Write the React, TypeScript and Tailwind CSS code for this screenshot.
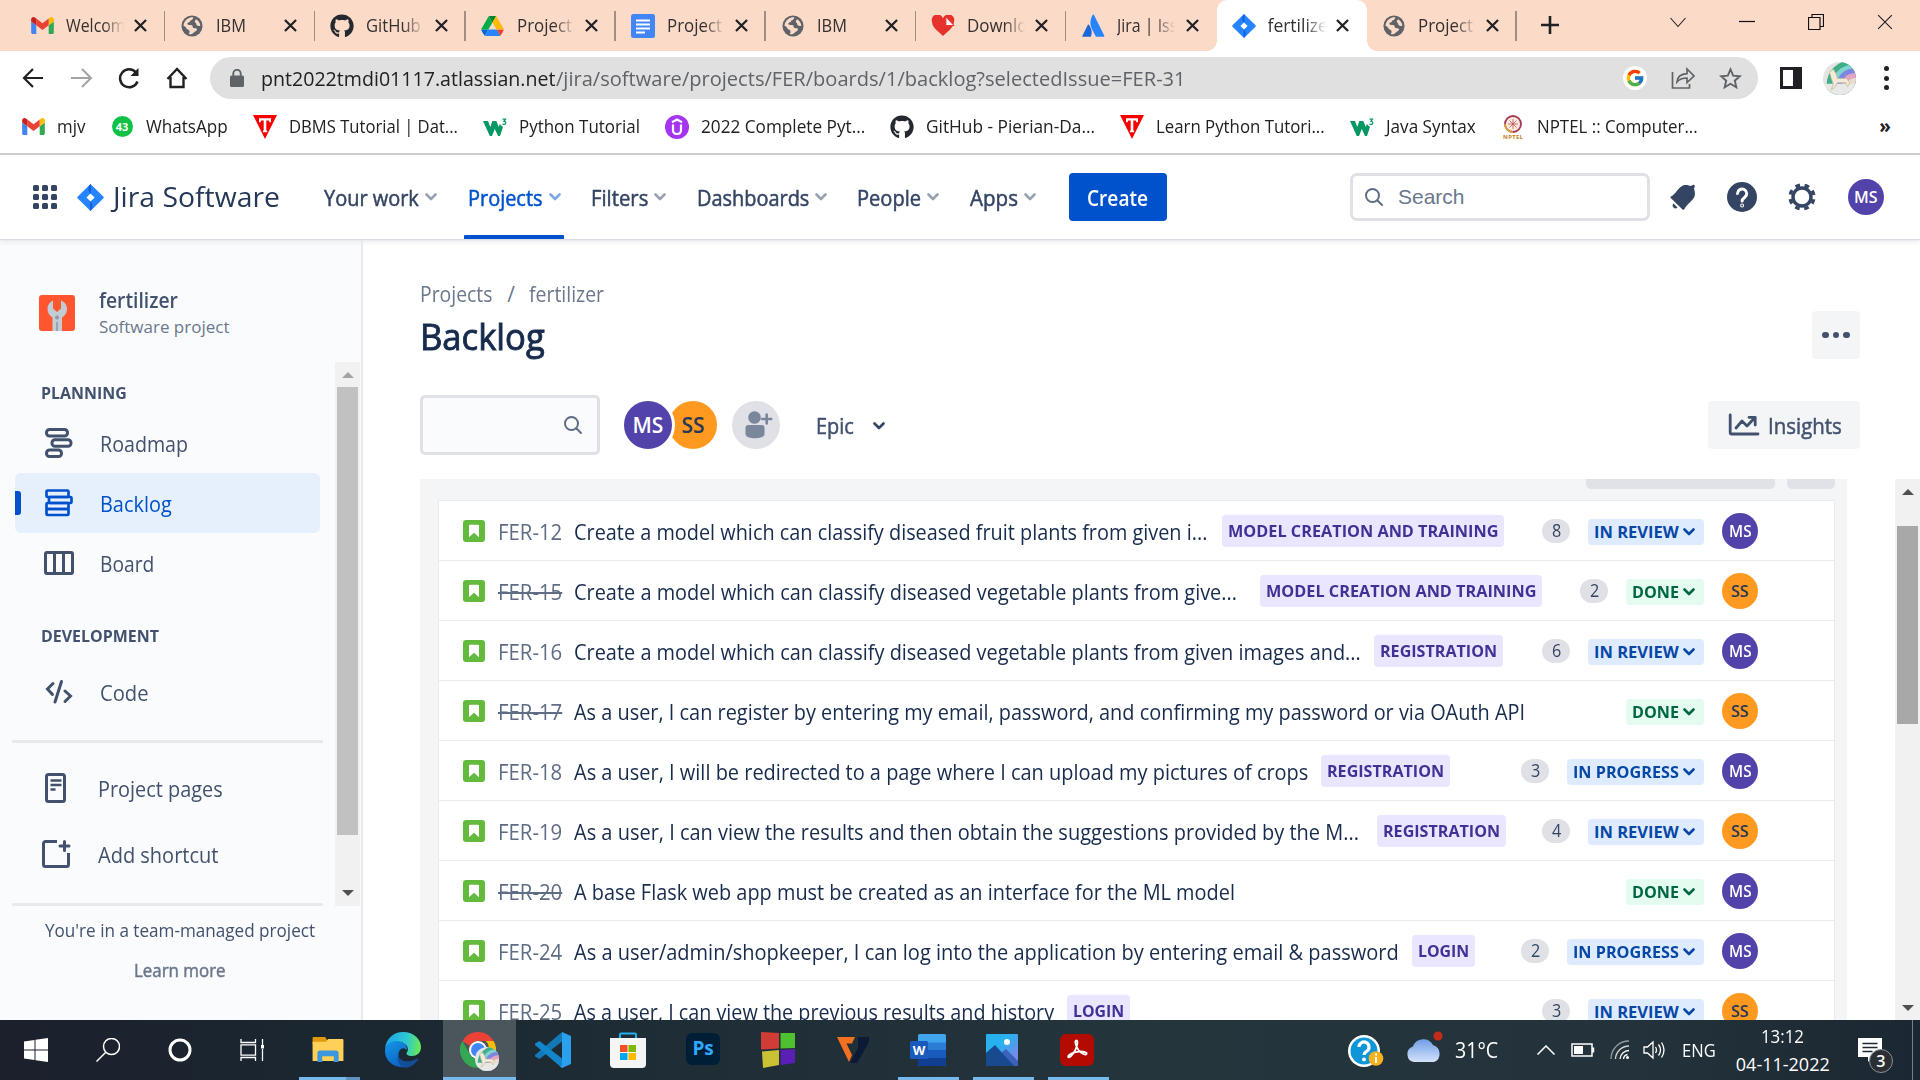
import React, { useLayoutEffect, useRef, useState } from "react";
import { FaGithub } from "react-icons/fa";
import { FcGoogle } from "react-icons/fc";

type FitProps = { w: number; className?: string; children: React.ReactNode };

/** Single line of text squeezed or stretched to an exact width. */
function Fit({ w, className = "", children }: FitProps) {
  const ref = useRef<HTMLSpanElement>(null);
  const [scale, setScale] = useState(1);
  useLayoutEffect(() => {
    if (ref.current) setScale(w / ref.current.offsetWidth);
  }, [w, children]);
  return (
    <span className={`block shrink-0 whitespace-nowrap ${className}`} style={{ width: w }}>
      <span ref={ref} className="inline-block origin-left" style={{ transform: `scaleX(${scale})` }}>
        {children}
      </span>
    </span>
  );
}

/* ---------- logos ---------- */

const Gmail = () => (
  <svg viewBox="52 42 88 66" className="h-[17px] w-[23px]">
    <path fill="#4285f4" d="M58 108h14V74L52 59v43c0 3.32 2.69 6 6 6" />
    <path fill="#34a853" d="M120 108h14c3.32 0 6-2.69 6-6V59l-20 15" />
    <path fill="#fbbc04" d="M120 48v26l20-15v-8c0-7.42-8.47-11.65-14.4-7.2" />
    <path fill="#ea4335" d="M72 74V48l24 18 24-18v26L96 92" />
    <path fill="#c5221f" d="M52 51v8l20 15V48l-5.6-4.2c-5.94-4.45-14.4-.22-14.4 7.2" />
  </svg>
);
const Drive = () => (
  <svg viewBox="0 0 87.3 78" className="h-5 w-[23px]">
    <path fill="#0066da" d="m6.6 66.85 3.85 6.65c.8 1.4 1.95 2.5 3.3 3.3l13.75-23.8h-27.5c0 1.55.4 3.1 1.2 4.5z" />
    <path fill="#00ac47" d="m43.65 25-13.75-23.8c-1.35.8-2.5 1.9-3.3 3.3l-25.4 44a9.06 9.06 0 0 0 -1.2 4.5h27.5z" />
    <path fill="#ea4335" d="m73.55 76.8c1.35-.8 2.5-1.9 3.3-3.3l1.6-2.75 7.65-13.25c.8-1.4 1.2-2.95 1.2-4.5h-27.502l5.852 11.5z" />
    <path fill="#00832d" d="m43.65 25 13.75-23.8c-1.35-.8-2.9-1.2-4.5-1.2h-18.5c-1.6 0-3.15.45-4.5 1.2z" />
    <path fill="#2684fc" d="m59.8 53h-32.3l-13.75 23.8c1.35.8 2.9 1.2 4.5 1.2h50.8c1.6 0 3.15-.45 4.5-1.2z" />
    <path fill="#ffba00" d="m73.4 26.5-12.7-22c-.8-1.4-1.95-2.5-3.3-3.3l-13.75 23.8 16.15 28h27.45c0-1.55-.4-3.1-1.2-4.5z" />
  </svg>
);
const Globe = () => (
  <svg viewBox="0 0 24 24" className="h-[22px] w-[22px]">
    <circle cx="12" cy="12" r="11.5" fill="#5f6368" />
    <path fill="#fcdac8" d="M13.5 2.6c-.6 1.7-1 2.7-2.8 3.1-1 .3-.7 2-1.900 2.300-1.300.3-2.300.9-1.800 2 .7 1.200 3.700.3 5 1.300 1.200 1 .3 2.400 1.700 2.900 1.600.5 2.800-.2 3.500.9.5 1-.1 2.100-1.300 2.700-1.500.8-2 1.700-3.500 2.600-.9.5-2.500.8-4 .5 1-1.300 1.200-2.600.6-3.900-.6-1.200-2.300-.8-3-2.200-.8-1.700-1.600-2.800-3.300-3.200.2-2.900 1.700-5.600 4.200-7.300 2-1.400 4.300-2 6.600-1.700z" />
    <path fill="#fcdac8" d="M16.500 4.500c2.600 1.500 4.400 4.200 4.600 7.200-1.300.6-2.800.4-3.800-.5-.9-.9-.3-2-1.500-2.800-1.300-.9-.8-2.700.7-3.900z" />
  </svg>
);
const Docs = () => (
  <svg viewBox="0 0 24 24" className="h-6 w-6">
    <rect width="24" height="24" rx="2.500" fill="#4285f4" />
    <path stroke="#fff" strokeWidth="2" d="M5 6.500h14M5 10.500h14M5 14.500h14M5 18.500h9" />
  </svg>
);
const Heart = () => (
  <svg viewBox="0 0 24 22" className="h-[21px] w-6">
    <path fill="#e5322d" d="M12 22C7 17 .5 13 .5 7A6 6 0 0 1 12 3.500 6 6 0 0 1 23.500 7C23.500 13 17 17 12 22z" />
    <path fill="#fff" stroke="#e5322d" d="M15 11V2l8.500 9z" />
  </svg>
);
const Atlassian = () => (
  <svg viewBox="0 0 24 24" className="h-[23px] w-[23px]">
    <path fill="#1868db" d="M7.100 11.300c-.4-.4-.9-.4-1.100.1L.3 22.900c-.2.4 0 .9.500.9h7.900c.3 0 .5-.1.6-.4 1.700-3.500.7-8.900-2.200-12.100z" />
    <path fill="#2684ff" d="M11.300.900C8.100 5.900 8.300 11.500 10.400 15.700l3.800 7.600c.1.300.4.400.7.400h7.900c.5 0 .700-.4.500-.9L12.400.9c-.3-.5-.8-.6-1.100 0z" />
  </svg>
);
const JiraMark = ({ className }: { className: string }) => (
  <svg viewBox="0 0 24 24" className={className}>
    <path fill="#2684ff" fillRule="evenodd" d="M12 0 23.500 11.300a1 1 0 0 1 0 1.400L12 24 .5 12.700a1 1 0 0 1 0-1.400zM12 8.400 8.400 12l3.600 3.600 3.600-3.600z" />
    <path fill="#0f5fd8" d="M12 8.400c-2.400-2.400-2.400-5.500 0-8.400l.3.300V8.700zM12 15.600c2.400 2.400 2.400 5.500 0 8.400l-.3-.3v-8.400z" />
  </svg>
);
const WhatsApp = () => (
  <span className="flex h-[21px] w-[21px] items-center justify-center rounded-full bg-[#0fc144] text-[11px] font-bold text-white">43</span>
);
const TPoint = () => (
  <svg viewBox="0 0 24 24" className="h-6 w-6">
    <path fill="#f80000" d="M0 0h24L12 24z" />
    <path fill="#fff" d="M6 3.200h12v4h-1.500L15.800 5.500H13.300V15l1 1.500v.8H9.700v-.8l1-1.500V5.500H8.200L7.500 7.200H6z" />
  </svg>
);
const W3 = () => (
  <svg viewBox="0 0 24 18" className="h-[18px] w-6">
    <path fill="#059862" d="M0 3h5l2.300 6 2-6h4l2.500 6 1-3 3.200 3-3 9h-2l-3.200-7-2.800 7H6.800z" />
    <path fill="none" stroke="#059862" strokeWidth="1.200" d="M19.500 1.200h3L21 3.300q2 .2 1.800 1.900-.4 1.800-3.300 1" />
  </svg>
);
const Udemy = () => (
  <svg viewBox="0 0 24 24" className="h-6 w-6">
    <circle cx="12" cy="12" r="12" fill="#a435f0" />
    <path fill="none" stroke="#fff" strokeWidth="2.200" d="M7 7.200 12 4.500l5 2.700M8 9.500V15q0 4 4 4t4-4V9.500" />
  </svg>
);
const Nptel = () => (
  <svg viewBox="0 0 24 24" className="h-6 w-6">
    <circle cx="12" cy="9" r="8" fill="#fbe9e2" stroke="#a43a52" strokeWidth="1.800" />
    <path d="M4 9a8 8 0 0 0 8 8" fill="none" stroke="#d9a33b" strokeWidth="1.800" />
    <path stroke="#b5433f" strokeWidth=".7" d="M12 4v10M7 9h10M8.500 5.500l7 7M15.500 5.500l-7 7" />
    <text x="12" y="23.500" textAnchor="middle" fontSize="6" fontWeight="700" fill="#c87f1c" textLength="20">NPTEL</text>
  </svg>
);
const ProfilePic = ({ className }: { className: string }) => (
  <svg viewBox="0 0 32 32" className={className}>
    <clipPath id="pp"><circle cx="16" cy="16" r="16" /></clipPath>
    <g clipPath="url(#pp)">
      <rect width="32" height="32" fill="#e4e4e2" />
      <circle cx="27" cy="22" r="23.500" fill="#3fae84" />
      <circle cx="28" cy="22" r="19" fill="#7fd3d0" />
      <circle cx="29" cy="22" r="15.500" fill="#7f86e0" />
      <circle cx="30" cy="23" r="12" fill="#e3a5c4" />
      <circle cx="31" cy="24" r="8.500" fill="#e6dcd0" />
      <path fill="#e8e8e6" d="M0 21h32v11H0z" />
      <path fill="#f3ead9" stroke="#c9b996" strokeWidth=".8" d="M6 10l4-3 3 5 1 4 9 0 3 4-2 4-2-4-8 0-3 5-3 2 2-6-2-5-1-4z" />
    </g>
  </svg>
);

/* ---------- browser chrome ---------- */

const tabs = [
  { icon: <Gmail />, label: "Welcom", w: 60 },
  { icon: <Globe />, label: "IBM", w: 30 },
  { icon: <FaGithub className="h-6 w-6 text-[#24292f]" />, label: "GitHub", w: 55 },
  { icon: <Drive />, label: "Project", w: 55 },
  { icon: <Docs />, label: "Project", w: 55 },
  { icon: <Globe />, label: "IBM", w: 30 },
  { icon: <Heart />, label: "Downlo", w: 60 },
  { icon: <Atlassian />, label: "Jira | Iss", w: 60 },
  { icon: <JiraMark className="h-6 w-6" />, label: "fertilize", w: 60, active: true },
  { icon: <Globe />, label: "Project", w: 55 },
];

const Cross = ({ className = "h-[13px] w-[13px]", sw = 2.400 }: { className?: string; sw?: number }) => (
  <svg viewBox="0 0 14 14" className={className}>
    <path d="M1 1l12 12M13 1 1 13" stroke="#202124" strokeWidth={sw} fill="none" />
  </svg>
);

function TabStrip() {
  return (
    <div className="flex h-[51px] bg-[#fcdac8] pl-[15px]">
      {tabs.map((t, i) => (
        <div
          key={i}
          className={
            t.active
              ? "relative flex w-[150.2px] items-center rounded-t-[10px] bg-white pl-[15px] pr-[18px]"
              : "relative flex w-[150.2px] items-center pl-[15px] pr-[18px]"
          }
        >
          <div className="flex w-6 justify-center">{t.icon}</div>
          <div className="ml-[12px] w-[60px] text-[17.5px] text-[#33302f] [mask-image:linear-gradient(90deg,#000_62%,transparent_97%)]">
            <Fit w={t.w}>{t.label}</Fit>
          </div>
          <div className="ml-auto">
            <Cross />
          </div>
          {!t.active && i !== 7 && <div className="absolute right-0 top-[11px] h-[30px] w-[1.500px] bg-[#a08d84]" />}
          {t.active && (
            <>
              <div className="absolute -left-[10px] bottom-0 h-[10px] w-[10px] bg-[radial-gradient(circle_at_0_0,#fcdac8_9.500px,#fff_10px)]" />
              <div className="absolute -right-[10px] bottom-0 z-10 h-[10px] w-[10px] bg-[radial-gradient(circle_at_100%_0,#fcdac8_9.500px,#fff_10px)]" />
            </>
          )}
        </div>
      ))}
      <svg viewBox="0 0 18 18" className="ml-[24px] mt-4 h-[18px] w-[18px]">
        <path d="M9 0v18M0 9h18" stroke="#202124" strokeWidth="2.600" />
      </svg>
      <div className="ml-auto flex pr-[27px] pt-[14px]">
        <svg viewBox="0 0 16 16" className="mr-[53px] h-4 w-4"><path d="M.5 4 8 12.500 15.500 4" fill="none" stroke="#222" strokeWidth="1.100" /></svg>
        <svg viewBox="0 0 16 16" className="mr-[53px] h-4 w-4"><path d="M0 7.500h16" stroke="#111" strokeWidth="1.200" /></svg>
        <svg viewBox="0 0 16 16" className="mr-[53px] h-4 w-4"><path d="M.5 3.500h11.500v12H.5zM4 3.500v-3h11.500v12H12" fill="none" stroke="#111" strokeWidth="1.200" /></svg>
        <Cross className="h-4 w-4" sw={1} />
      </div>
    </div>
  );
}

function AddressBar() {
  return (
    <div className="flex h-[54px] items-center bg-white pl-[22px]">
      <svg viewBox="0 0 22 22" className="h-[22px] w-[22px]" fill="none" stroke="#202124" strokeWidth="2.200"><path d="M21 11H2M11 2l-9 9 9 9" /></svg>
      <svg viewBox="0 0 22 22" className="ml-[27px] h-[22px] w-[22px]" fill="none" stroke="#a3a3a3" strokeWidth="2"><path d="M0 11h19M11 2l9 9-9 9" /></svg>
      <svg viewBox="0 0 22 22" className="ml-[25px] h-[22px] w-[22px]" fill="none" stroke="#202124" strokeWidth="2.500"><path d="M19.500 14.500A9 9 0 1 1 18 5.500" /><path d="M20.500 1v8h-8z" fill="#202124" stroke="none" /></svg>
      <svg viewBox="0 0 22 22" className="ml-[26px] h-[22px] w-[22px]" fill="none" stroke="#202124" strokeWidth="2.400"><path d="M1.500 12 11 2l9.500 10M4.500 10v10h13V10" /></svg>
      <div className="ml-[22px] flex h-[42px] w-[1548px] items-center rounded-full bg-[#e0e0e0] pl-[20px] pr-[16px]">
        <svg viewBox="0 0 14 18" className="h-[18px] w-[14px]"><rect y="6.500" width="14" height="11.500" rx="1.500" fill="#5f6368" /><path d="M3.300 7V4.500a3.700 3.700 0 0 1 7.400 0V7" fill="none" stroke="#5f6368" strokeWidth="1.900" /></svg>
        <div className="ml-[17px] flex text-[20px]">
          <Fit w={295} className="text-[#202124]">pnt2022tmdi01117.atlassian.net</Fit>
          <Fit w={630} className="text-[#5f6368]">/jira/software/projects/FER/boards/1/backlog?selectedIssue=FER-31</Fit>
        </div>
        <div className="ml-auto flex h-6 w-6 items-center justify-center rounded-full bg-white"><FcGoogle className="h-5 w-5" /></div>
        <svg viewBox="0 0 24 22" className="ml-[24px] h-[22px] w-6" fill="none" stroke="#5f6368" strokeWidth="1.700"><path d="M1.500 5v16h17v-4" /><path d="M6 15c.5-6 4-8 10-8.300V2l7 7-7 6.500V11c-4.500 0-7.500 1-10 4z" /></svg>
        <svg viewBox="0 0 24 24" className="ml-[24px] h-[23px] w-[23px]" fill="none" stroke="#5f6368" strokeWidth="2"><path d="m12 2.500 2.800 6.500 7 .6-5.300 4.700 1.600 6.900L12 17.500l-6.100 3.700 1.600-6.900L2.200 9.600l7-.6z" /></svg>
      </div>
      <div className="ml-[22px] h-[22px] w-[22px] border-[3px] border-r-[9px] border-[#202124]" />
      <ProfilePic className="ml-[21px] h-[33px] w-[33px]" />
      <div className="ml-[28px] flex flex-col gap-[4.500px]">
        <i className="h-[5px] w-[5px] rounded-full bg-[#202124]" />
        <i className="h-[5px] w-[5px] rounded-full bg-[#202124]" />
        <i className="h-[5px] w-[5px] rounded-full bg-[#202124]" />
      </div>
    </div>
  );
}

const bookmarks = [
  { icon: <Gmail />, label: "mjv", w: 28 },
  { icon: <WhatsApp />, label: "WhatsApp", w: 82 },
  { icon: <TPoint />, label: "DBMS Tutorial | Dat...", w: 169 },
  { icon: <W3 />, label: "Python Tutorial", w: 121 },
  { icon: <Udemy />, label: "2022 Complete Pyt...", w: 164 },
  { icon: <FaGithub className="h-6 w-6 text-[#24292f]" />, label: "GitHub - Pierian-Da...", w: 169 },
  { icon: <TPoint />, label: "Learn Python Tutori...", w: 169 },
  { icon: <W3 />, label: "Java Syntax", w: 90 },
  { icon: <Nptel />, label: "NPTEL :: Computer...", w: 161 },
];

function Bookmarks() {
  return (
    <div className="flex h-[50px] items-center gap-[25px] border-b-2 border-[#cbcbcb] bg-white pb-[5px] pl-[21px] pr-[29px] text-[17.5px] text-[#202124]">
      {bookmarks.map((b, i) => (
        <div key={i} className="flex items-center gap-3">
          <div className="flex w-6 justify-center">{b.icon}</div>
          <Fit w={b.w}>{b.label}</Fit>
        </div>
      ))}
      <span className="ml-auto text-[19px] font-bold">»</span>
    </div>
  );
}

/* ---------- Jira header ---------- */

const Chevron = ({ className }: { className: string }) => (
  <svg viewBox="0 0 12 8" className={className} fill="none" stroke="currentColor" strokeWidth="2.600" strokeLinecap="round" strokeLinejoin="round">
    <path d="M1.500 1.500 6 6l4.500-4.500" />
  </svg>
);
const Magnifier = () => (
  <svg viewBox="0 0 20 20" className="h-5 w-5" fill="none" stroke="#5e6c84" strokeWidth="2" strokeLinecap="round">
    <circle cx="8.500" cy="8.500" r="6.500" />
    <path d="m13.500 13.500 4.500 4.500" />
  </svg>
);

const nav = [
  { label: "Your work", w: 95 },
  { label: "Projects", w: 75, active: true },
  { label: "Filters", w: 57 },
  { label: "Dashboards", w: 112 },
  { label: "People", w: 64 },
  { label: "Apps", w: 48 },
];

function JiraHeader() {
  return (
    <header className="relative z-20 flex h-[84px] items-center bg-white pl-[33px] pr-[36px] shadow-[0_1px_1px_#dddee5,0_3px_5px_#e9eaee]">
      <div className="grid grid-cols-3 gap-[3px]">
        {Array.from({ length: 9 }, (_, i) => (
          <i key={i} className="h-[6px] w-[6px] rounded-[1.500px] bg-[#344563]" />
        ))}
      </div>
      <JiraMark className="ml-[20px] h-[27px] w-[27px]" />
      <Fit w={167} className="ml-[9px] pb-[2px] text-[28px] leading-[28px] text-[#253858]">Jira Software</Fit>
      <nav className="ml-[44px] flex h-full gap-[30.500px]">
        {nav.map((n) => (
          <div
            key={n.label}
            className={
              n.active
                ? "relative flex h-full items-center gap-[6px] pt-[2px] text-[#0052cc]"
                : "flex h-full items-center gap-[6px] pt-[2px] text-[#344563]"
            }
          >
            <Fit w={n.w} className="text-[21px] leading-[28px] [-webkit-text-stroke:0.5px_currentColor]">{n.label}</Fit>
            <Chevron className="mb-[2px] h-2 w-3 opacity-50" />
            {n.active && <div className="absolute -left-[4px] -right-[3px] bottom-0 h-1 rounded-t-[1px] bg-[#0052cc]" />}
          </div>
        ))}
      </nav>
      <button className="ml-[33px] flex h-12 w-[98px] items-center justify-center rounded-[4px] bg-[#0052cc] text-[21px] font-semibold text-white">
        <Fit w={61} className="pt-[2px]">Create</Fit>
      </button>
      <div className="ml-auto flex h-12 w-[300px] items-center rounded-[7px] border-[3px] border-[#dfe1e6] pl-[11px]">
        <Magnifier />
        <span className="ml-[14px] font-['Liberation_Sans',sans-serif] text-[21px] text-[#6b778c]">Search</span>
      </div>
      <svg viewBox="0 0 26 26" className="ml-[20px] h-[26px] w-[26px]" fill="#344563">
        <path d="M1 12.500C6 10 8 3.500 13 1.500c3-1.200 6 0 8 .5l2.500-1.500 1.500 1.500-1 2.500c.6 2 1.500 5 .5 8-2 5-8 7.500-10 12.500-.5 1-1.200 1-2 .4L1 14.300c-.8-.8-.8-1.500 0-1.800zM3.500 19.500l4 4c-1.500 1.500-3 1-4 0s-1.500-2.500 0-4z" />
      </svg>
      <div className="ml-[31px] flex h-[30px] w-[30px] items-center justify-center rounded-full bg-[#344563]">
        <svg viewBox="0 0 30 30" className="h-[30px] w-[30px]" fill="none" stroke="#fff" strokeWidth="3" strokeLinecap="round"><path d="M10.500 11.500a4.600 4.600 0 1 1 7.300 3.800c-1.700 1.200-2.700 1.800-2.700 3.700" /><circle cx="15.100" cy="23.500" r=".5" /></svg>
      </div>
      <svg viewBox="0 0 28 28" className="ml-[31px] h-7 w-7" fill="none" stroke="#344563">
        <circle cx="14" cy="14" r="9" strokeWidth="3.400" />
        <circle cx="14" cy="14" r="12" strokeWidth="3.200" strokeDasharray="4.700 4.725" strokeDashoffset="-2.300" />
      </svg>
      <div className="ml-[32px] flex h-9 w-9 items-center justify-center rounded-full bg-[#5243aa] text-[16px] font-semibold text-white">
        <Fit w={24}>MS</Fit>
      </div>
    </header>
  );
}

/* ---------- sidebar ---------- */

const sw = { fill: "none", stroke: "currentColor", strokeWidth: 3 } as const;
const RoadmapIcon = () => (
  <svg viewBox="0 0 30 32" className="h-8 w-[30px]" {...sw}>
    <rect x="2.500" y="2.500" width="21" height="6.500" rx="3" /><rect x="8" y="12.700" width="19" height="6.500" rx="3" /><rect x="2.500" y="23" width="15" height="6.500" rx="3" />
  </svg>
);
const BacklogIcon = () => (
  <svg viewBox="0 0 30 30" className="h-[30px] w-[30px]" {...sw} strokeWidth={2.700}>
    <rect x="2.500" y="2.500" width="22" height="6.500" rx="1" /><rect x="5" y="9" width="22.500" height="6" rx="1" /><rect x="2.500" y="15" width="22" height="6" rx="1" /><rect x="2.500" y="21" width="22" height="6" rx="1" />
  </svg>
);
const BoardIcon = () => (
  <svg viewBox="0 0 30 30" className="h-[30px] w-[30px]" {...sw}><rect x="1.500" y="4.500" width="27" height="21" rx="1.500" /><path d="M10.500 4.500v21M19.500 4.500v21" /></svg>
);
const CodeIcon = () => (
  <svg viewBox="0 0 30 30" className="h-[30px] w-[30px]" {...sw} strokeLinecap="round"><path d="M9 6.500 3.500 12l5 5.500M17.500 4.500 11 25M21 14l5.500 5-5.500 5.500" /></svg>
);
const PagesIcon = () => (
  <svg viewBox="0 0 30 32" className="h-8 w-[30px]" {...sw}><rect x="5.500" y="2.500" width="18" height="27" rx="2" /><path d="M9.500 8.500h11M9.500 13h11M9.500 17.500h5" strokeWidth="2.700" /></svg>
);
const ShortcutIcon = () => (
  <svg viewBox="0 0 30 30" className="h-[30px] w-[30px]" {...sw}><path d="M16 2.500H4.500a2 2 0 0 0-2 2v21a2 2 0 0 0 2 2h21a2 2 0 0 0 2-2V14" /><path d="M23.500 2.500v9M19 7h9" strokeLinecap="round" /></svg>
);

function SideItem({ icon, label, w, active }: { icon: React.ReactNode; label: string; w: number; active?: boolean }) {
  return (
    <div
      className={
        active
          ? "mx-[15px] flex h-[60px] w-[305px] items-center rounded-[6px] bg-[#e6effc] text-[#0052cc]"
          : "mx-[15px] flex h-[60px] w-[305px] items-center text-[#42526e]"
      }
    >
      <div className={active ? "h-6 w-[6px] rounded-r-[3px] bg-[#0052cc]" : "w-[6px]"} />
      <div className="ml-[23px] w-[30px]">{icon}</div>
      <Fit w={w} className="ml-[26px] pt-px text-[21px] leading-[26px]">{label}</Fit>
    </div>
  );
}

const ArrowTri = ({ down, className }: { down?: boolean; className: string }) => (
  <svg viewBox="0 0 12 6" className={className} fill="currentColor"><path d={down ? "M0 0h12L6 6z" : "M0 6h12L6 0z"} /></svg>
);

function Sidebar() {
  return (
    <aside className="flex w-[363px] shrink-0 flex-col border-r-2 border-[#e9eaed] bg-[#fafbfc]">
      <div className="flex h-[123px] pl-[39px] pt-[47px]">
        <svg viewBox="0 0 36 36" className="mt-[9px] h-9 w-9">
          <rect width="36" height="36" rx="3" fill="#ff5630" />
          <path fill="#c1ccd3" d="M14 5.500v8l4 3.500 4-3.500v-8c4 1.500 6 5 6 8.500 0 4-2 6.500-5 8.500v13.500h-9.500V22.500c-3-2-5-4.500-5-8.500 0-3.500 2-7 5.500-8.500z" />
          <circle cx="18" cy="22.500" r="2" fill="#8b9aa5" />
          <path d="M18 27v9" stroke="#8b9aa5" strokeWidth="1.500" />
        </svg>
        <div className="ml-[24px]">
          <Fit w={79} className="text-[21px] font-semibold leading-[28px] text-[#42526e]">fertilizer</Fit>
          <Fit w={130} className="text-[17px] leading-[26px] text-[#6b778c]">Software project</Fit>
        </div>
      </div>
      <div className="flex h-[544px]">
        <div className="w-[335px] overflow-hidden">
          <Fit w={86} className="ml-[41px] mt-[18px] h-[33px] text-[16.5px] font-bold leading-[26px] text-[#42526e]">PLANNING</Fit>
          <SideItem icon={<RoadmapIcon />} label="Roadmap" w={88} />
          <SideItem icon={<BacklogIcon />} label="Backlog" w={72} active />
          <SideItem icon={<BoardIcon />} label="Board" w={54} />
          <Fit w={118} className="ml-[41px] mt-[30px] h-[39px] text-[16.5px] font-bold leading-[26px] text-[#42526e]">DEVELOPMENT</Fit>
          <SideItem icon={<CodeIcon />} label="Code" w={49} />
          <div className="ml-3 mt-[18px] h-[3px] w-[311px] bg-[#e8e9ec]" />
          <div className="mt-[12px] flex h-[66px] items-center pl-[41px] text-[21px] leading-[26px] text-[#42526e]">
            <PagesIcon />
            <Fit w={125} className="ml-[27px] pt-px">Project pages</Fit>
          </div>
          <div className="flex h-[66px] items-center pl-[41px] text-[21px] leading-[26px] text-[#42526e]">
            <ShortcutIcon />
            <Fit w={120} className="ml-[27px] pt-px">Add shortcut</Fit>
          </div>
          <div className="ml-3 mt-[16px] h-[3px] w-[311px] rounded bg-[#e8e9ec]" />
        </div>
        <div className="flex w-[25px] flex-col items-center bg-[#f1f1f1] pb-[10px] pt-[10px]">
          <ArrowTri className="h-[6px] w-3 text-[#a3a3a3]" />
          <div className="mt-[9px] h-[448px] w-[21px] bg-[#c1c1c1]" />
          <ArrowTri down className="mt-auto h-[6px] w-3 text-[#505050]" />
        </div>
      </div>
      <div className="flex flex-col items-center pr-[2px] pt-[11px]">
        <Fit w={270} className="text-[18px] leading-[26px] text-[#42526e]">You're in a team-managed project</Fit>
        <Fit w={92} className="mt-[14px] text-[18px] leading-[26px] text-[#6b778c] [-webkit-text-stroke:0.5px_currentColor]">Learn more</Fit>
      </div>
    </aside>
  );
}

/* ---------- backlog ---------- */

type Status = "IN REVIEW" | "DONE" | "IN PROGRESS";
type Issue = { id: string; title: string; w: number; epic?: [string, number, number]; pts?: number; status: Status; who: "MS" | "SS" };

const MODEL = "MODEL CREATION AND TRAINING";
const issues: Issue[] = [
  { id: "FER-12", title: "Create a model which can classify diseased fruit plants from given i...", w: 633, epic: [MODEL, 270, 15], pts: 8, status: "IN REVIEW", who: "MS" },
  { id: "FER-15", title: "Create a model which can classify diseased vegetable plants from give...", w: 663, epic: [MODEL, 270, 23], pts: 2, status: "DONE", who: "SS" },
  { id: "FER-16", title: "Create a model which can classify diseased vegetable plants from given images and...", w: 787, epic: ["REGISTRATION", 117, 13], pts: 6, status: "IN REVIEW", who: "MS" },
  { id: "FER-17", title: "As a user, I can register by entering my email, password, and confirming my password or via OAuth API", w: 951, status: "DONE", who: "SS" },
  { id: "FER-18", title: "As a user, I will be redirected to a page where I can upload my pictures of crops", w: 734, epic: ["REGISTRATION", 117, 13], pts: 3, status: "IN PROGRESS", who: "MS" },
  { id: "FER-19", title: "As a user, I can view the results and then obtain the suggestions provided by the M...", w: 785, epic: ["REGISTRATION", 117, 18], pts: 4, status: "IN REVIEW", who: "SS" },
  { id: "FER-20", title: "A base Flask web app must be created as an interface for the ML model", w: 661, status: "DONE", who: "MS" },
  { id: "FER-24", title: "As a user/admin/shopkeeper, I can log into the application by entering email & password", w: 825, epic: ["LOGIN", 51, 13], pts: 2, status: "IN PROGRESS", who: "MS" },
  { id: "FER-25", title: "As a user, I can view the previous results and history", w: 480, epic: ["LOGIN", 51, 13], pts: 3, status: "IN REVIEW", who: "SS" },
];

const statusStyle: Record<Status, { cls: string; w: number }> = {
  "IN REVIEW": { cls: "bg-[#deebff] text-[#0747a6]", w: 85 },
  DONE: { cls: "bg-[#e3fcef] text-[#006644]", w: 47 },
  "IN PROGRESS": { cls: "bg-[#deebff] text-[#0747a6]", w: 106 },
};

function IssueRow({ it }: { it: Issue }) {
  const s = statusStyle[it.status];
  return (
    <div className="flex h-[60px] shrink-0 items-center border-t border-[#e9eaee] bg-white pl-[24px] pr-[76px]">
      <svg viewBox="0 0 22 22" className="h-[22px] w-[22px]">
        <rect width="22" height="22" rx="3" fill="#63ba3c" />
        <path fill="#fff" d="M7 4.800h8a1 1 0 0 1 1 1V17.300l-5-4.500-5 4.500V5.800a1 1 0 0 1 1-1z" />
      </svg>
      <Fit
        w={64}
        className={
          it.status === "DONE"
            ? "ml-[13px] mt-[3px] text-[21px] leading-[26px] text-[#5e6c84] [&>span]:line-through [&>span]:decoration-2"
            : "ml-[13px] mt-[3px] text-[21px] leading-[26px] text-[#5e6c84]"
        }
      >
        {it.id}
      </Fit>
      <Fit w={it.w} className="ml-3 mt-[3px] text-[21px] leading-[26px] text-[#172b4d]">{it.title}</Fit>
      {it.epic && (
        <div className="flex items-center" style={{ marginLeft: it.epic[2] }}>
          <div className="mt-px flex h-8 items-center rounded-[4px] bg-[#eae6ff] px-[6px] text-[16.5px] font-bold text-[#403294]">
            <Fit w={it.epic[1]}>{it.epic[0]}</Fit>
          </div>
        </div>
      )}
      <div className="ml-auto flex items-center">
        {it.pts && (
          <div className="mr-[18px] flex h-6 w-7 items-center justify-center rounded-full bg-[#dfe1e6] text-[18px] text-[#344563]">
            <Fit w={9}>{it.pts}</Fit>
          </div>
        )}
        <div className={`mr-[18px] mt-[2px] flex h-[26px] items-center gap-[4px] rounded-[4px] pl-[6px] pr-[9px] text-[16.5px] font-bold ${s.cls}`}>
          <Fit w={s.w} className="pt-px">{it.status}</Fit>
          <Chevron className="mt-px h-2 w-3" />
        </div>
        <div
          className={
            it.who === "MS"
              ? "flex h-9 w-9 items-center justify-center rounded-full bg-[#5243aa] text-[16px] font-semibold text-white"
              : "flex h-9 w-9 items-center justify-center rounded-full bg-[#ff991f] text-[16px] font-semibold text-[#253858]"
          }
        >
          <Fit w={it.who === "MS" ? 23 : 18}>{it.who}</Fit>
        </div>
      </div>
    </div>
  );
}

function Main() {
  return (
    <main className="flex min-w-0 flex-1 flex-col bg-white pl-[57px]">
      <div className="flex h-[156px] pt-[42px]">
        <div>
          <div className="flex text-[21px] leading-[26px] text-[#6b778c]">
            <Fit w={73}>Projects</Fit>
            <span className="w-9 text-center">/</span>
            <Fit w={75}>fertilizer</Fit>
          </div>
          <Fit w={125} className="mt-[8px] text-[36px] leading-[44px] text-[#172b4d] [-webkit-text-stroke:0.9px_currentColor]">Backlog</Fit>
        </div>
        <div className="ml-auto mr-[60px] mt-[30px] flex h-12 w-12 items-center justify-center gap-1 rounded-[4px] bg-[#f4f5f7]">
          <i className="h-[6.500px] w-[6.500px] rounded-full bg-[#42526e]" />
          <i className="h-[6.500px] w-[6.500px] rounded-full bg-[#42526e]" />
          <i className="h-[6.500px] w-[6.500px] rounded-full bg-[#42526e]" />
        </div>
      </div>
      <div className="flex h-[60px] items-center">
        <div className="flex h-[60px] w-[180px] items-center justify-end rounded-[5px] border-[3px] border-[#dfe1e6] bg-[#fafbfc] pr-[14px]">
          <Magnifier />
        </div>
        <div className="z-10 ml-[21px] flex h-[54px] w-[54px] items-center justify-center rounded-full border-[3px] border-white bg-[#5243aa] text-[21px] font-semibold text-white">
          <Fit w={31}>MS</Fit>
        </div>
        <div className="-ml-[9px] flex h-[54px] w-[54px] items-center justify-center rounded-full border-[3px] border-white bg-[#ff991f] text-[21px] font-semibold text-[#253858]">
          <Fit w={23}>SS</Fit>
        </div>
        <svg viewBox="0 0 48 48" className="ml-[12px] h-12 w-12">
          <circle cx="24" cy="24" r="24" fill="#dfe1e6" />
          <g fill="#7a869a">
            <circle cx="22.500" cy="16.500" r="6.300" />
            <path d="M13.500 27a3 3 0 0 1 3-3h13a3 3 0 0 1 3 3v6c0 3-5 4.300-9.500 4.300s-9.500-1.300-9.500-4.300z" />
            <path d="M34.700 13.500v9M30.200 18h9" stroke="#7a869a" strokeWidth="2.600" strokeLinecap="round" />
          </g>
        </svg>
        <Fit w={38} className="ml-[36px] pt-[2px] text-[21px] leading-[26px] text-[#42526e] [-webkit-text-stroke:0.5px_currentColor]">Epic</Fit>
        <Chevron className="ml-[19px] mt-[2px] h-2 w-3 text-[#344563]" />
        <div className="ml-auto mr-[60px] flex h-12 w-[152px] items-center rounded-[4px] bg-[#f4f5f7] pl-[20px] text-[#42526e]">
          <svg viewBox="0 0 32 24" className="h-6 w-8" fill="none" stroke="currentColor" strokeWidth="2.800" strokeLinecap="round" strokeLinejoin="round">
            <path d="M2.200 2v17.500a1.500 1.500 0 0 0 1.500 1.500H30" />
            <path d="m8 15 6-7 5 5 7.500-8M21 4.300h6.200V12" />
          </svg>
          <Fit w={74} className="ml-[8px] pt-[2px] text-[21px] leading-[26px] [-webkit-text-stroke:0.5px_currentColor]">Insights</Fit>
        </div>
      </div>
      <div className="mt-6 flex h-[541px]">
        <div className="flex w-[1427px] flex-col overflow-hidden bg-[#f4f5f7] px-[12px]">
          <div className="flex h-[21px] shrink-0 justify-end gap-3">
            <div className="h-[10px] w-[189px] rounded-b-[5px] bg-[#e1e2e8]" />
            <div className="h-[10px] w-12 rounded-b-[5px] bg-[#e1e2e8]" />
          </div>
          <div className="ml-[6px] flex flex-col border-x border-[#e9eaee]">
            {issues.map((it) => <IssueRow key={it.id} it={it} />)}
          </div>
        </div>
        <div className="ml-auto flex w-[25px] flex-col items-center bg-[#f1f1f1] pt-[10px]">
          <ArrowTri className="h-[6px] w-3 text-[#505050]" />
          <div className="mt-[31px] h-[198px] w-[21px] bg-[#a8a8a8]" />
          <ArrowTri down className="mb-[9px] mt-auto h-[6px] w-3 text-[#505050]" />
        </div>
      </div>
    </main>
  );
}

/* ---------- taskbar ---------- */

const WinIcon = () => <svg viewBox="0 0 24 24" className="h-6 w-6" fill="#fff"><path d="M0 3.400 10.500 2v9.500H0zM11.500 1.800 24 0v11.500H11.500zM0 12.500h10.500V22L0 20.600zM11.500 12.500H24V24l-12.500-1.800z" /></svg>;
const FindIcon = () => <svg viewBox="0 0 24 24" className="h-6 w-6" fill="none" stroke="#fff" strokeWidth="1.500"><circle cx="15.500" cy="8.500" r="8" /><path d="M9.800 14.200.5 23.500" /></svg>;
const CortanaIcon = () => <svg viewBox="0 0 24 24" className="h-6 w-6"><circle cx="12" cy="12" r="10" fill="none" stroke="#fff" strokeWidth="3" /></svg>;
const TaskViewIcon = () => <svg viewBox="0 0 24 24" className="h-6 w-6" fill="none" stroke="#fff" strokeWidth="1.300"><path d="M1 1v3.500h14.500V1M1 23v-3.500h14.500V23M1 6.800h14.500v10.400H1zM22.500 1v6M22.500 11v12" /><path fill="#fff" stroke="none" d="M21 7h3v3.500h-3z" /></svg>;
const ExplorerIcon = () => (
  <svg viewBox="0 0 32 28" className="h-[27px] w-8"><path fill="#e19a0a" d="M0 1a1 1 0 0 1 1-1h12l2 3v4H0z" /><path fill="#ffd057" d="M0 5h14l2-3h15a1 1 0 0 1 1 1v22H0z" /><path fill="#3d97df" d="M5 17a3 3 0 0 1 3-3h16a3 3 0 0 1 3 3v9h-5v-6H10v6H5z" /></svg>
);
const EdgeIcon = () => (
  <svg viewBox="0 0 36 36" className="h-9 w-9">
    <defs>
      <linearGradient id="e1" x1="0" y1=".4" x2="1" y2=".5"><stop offset="0" stopColor="#1ba4ea" /><stop offset=".6" stopColor="#2fc9cf" /><stop offset="1" stopColor="#6bea50" /></linearGradient>
      <linearGradient id="e2" x1="0" y1="0" x2=".6" y2="1"><stop offset="0" stopColor="#1597e6" /><stop offset="1" stopColor="#0c62c4" /></linearGradient>
    </defs>
    <path fill="url(#e1)" d="M0 17C1 6 9 0 18 0c11 0 18 7.500 18 15 0 6-4.500 9-9 9-4 0-6-1.500-5.500-3 1.500-2 2-4 .5-7C18 8 4 8 0 17z" />
    <path fill="url(#e2)" d="M0 19C0 12 6 9 12 9c7 0 11 5 9.500 9-4-4-8 0-8 5 0 7 6 12 12 11C13 38.500 0 31 0 19z" />
    <path fill="#134f97" d="M13.500 22c0 7 8 10 19 4.500 1-.4 1 .5.500 1.200C29 33.500 24 36 19 35.500c-6-1.500-7.500-10-5.500-13.500z" />
  </svg>
);
const ChromeIcon = () => (
  <div className="relative h-9 w-9">
    <svg viewBox="0 0 36 36" className="h-9 w-9">
      <path fill="#ea4335" d="M2.400 9A18 18 0 0 1 33.600 9H18a9 9 0 0 0-8 5z" />
      <path fill="#34a853" d="M2.400 9A18 18 0 0 0 18 36l8-13.500a9 9 0 0 1-15.800 0z" />
      <path fill="#fbbc04" d="M33.600 9A18 18 0 0 1 18 36l7.800-13.500A9 9 0 0 0 25.800 9z" />
      <circle cx="18" cy="18" r="9" fill="#fff" /><circle cx="18" cy="18" r="7" fill="#4285f4" />
    </svg>
    <ProfilePic className="absolute -bottom-[3px] -right-[3px] h-6 w-6" />
  </div>
);
const VsCodeIcon = () => (
  <svg viewBox="0 0 36 36" className="h-9 w-9"><path fill="#1478b8" d="M27 0v9.500L4.500 27 0 24.500V23z" /><path fill="#1385cb" d="M27 36v-9.500L4.500 9 0 11.500V13z" /><path fill="#2aa0ee" d="M27 0l9 4v28l-9 4-2-2h2z" /></svg>
);
const StoreIcon = () => (
  <svg viewBox="0 0 36 36" className="h-9 w-9"><path d="M10 7V2.500a1 1 0 0 1 1-1h14a1 1 0 0 1 1 1V7" fill="none" stroke="#22b1ee" strokeWidth="2" /><path fill="#f5f5f5" d="M0 6h36v26a4 4 0 0 1-4 4H4a4 4 0 0 1-4-4z" /><path fill="#f25022" d="M10 13h7.500v7H10z" /><path fill="#7fba00" d="M18.500 13H26v7h-7.500z" /><path fill="#00a4ef" d="M10 21h7.500v7H10z" /><path fill="#ffb900" d="M18.500 21H26v7h-7.500z" /></svg>
);
const PsIcon = () => (
  <div className="mb-[3px] flex h-8 w-[34px] items-center justify-center rounded-[6px] bg-[#001e36] text-[19px] font-bold text-[#31a8ff]"><Fit w={21}>Ps</Fit></div>
);
const BlocksIcon = () => (
  <svg viewBox="0 0 34 36" className="h-9 w-[34px]"><path fill="#d23c36" d="M0 0l18 1v15.500L0 17.500z" /><path fill="#4fc030" d="M19.500 1H34v15l-14.500.5z" /><path fill="#c8c234" d="M1 19.500l17-1.500v15L2 36z" /><path fill="#5a1fb4" d="M19.500 18 34 17v14l-14.500 2z" /></svg>
);
const SevenIcon = () => (
  <svg viewBox="0 0 32 26" className="h-[26px] w-8"><path fill="#f37021" d="M0 0h18l-3 6.500H9.500L15 18l-3 7z" /><path fill="#0c1a36" d="M21 0h11v5L20 26h-7l8-15z" /></svg>
);
const WordIcon = () => (
  <svg viewBox="0 0 36 32" className="h-8 w-9"><rect x="8" width="28" height="32" rx="1.500" fill="#41a5ee" /><path fill="#2b7cd3" d="M8 8.500h28V16H8z" /><path fill="#185abd" d="M8 16h28v8H8z" /><path fill="#103f91" d="M8 24h28v6.500a1.500 1.500 0 0 1-1.500 1.500h-25A1.500 1.500 0 0 1 8 30.500z" /><rect y="7" width="18" height="18" rx="1.500" fill="#185abd" /><text x="9" y="21" textAnchor="middle" fontSize="13" fontWeight="700" fill="#fff">W</text></svg>
);
const PhotosIcon = () => (
  <svg viewBox="0 0 32 32" className="h-8 w-8"><defs><linearGradient id="ph" x1="0" y1="0" x2="1" y2="1"><stop offset=".4" stopColor="#28b0ef" /><stop offset="1" stopColor="#9a78e8" /></linearGradient></defs><rect width="32" height="32" rx="1" fill="url(#ph)" /><path fill="#3a62b8" d="M14 20l6-5 12 12v5H14z" /><path fill="#174a8e" d="M0 19l9-8 19 21H0z" /><circle cx="21" cy="8" r="3" fill="#fff" /></svg>
);
const AcrobatIcon = () => (
  <svg viewBox="0 0 34 32" className="h-8 w-[34px]"><rect width="34" height="32" rx="6" fill="#b30b00" /><path fill="none" stroke="#fff" strokeWidth="1.800" d="M16.500 6.500c-2.500 0-.5 6 2 9.500 2.500 3.300 6.500 5.500 8 4 1.200-1.500-3-3-8-2.300-5 .6-10.500 2.800-10.300 5 .3 2.300 4.300-1 6.800-6 2.200-4.300 3.300-10.200 1.500-10.200z" /></svg>
);

const pinned: { icon: React.ReactNode; bar?: "split" | "active" | "open" }[] = [
  { icon: <ExplorerIcon />, bar: "split" },
  { icon: <EdgeIcon /> },
  { icon: <ChromeIcon />, bar: "active" },
  { icon: <VsCodeIcon /> },
  { icon: <StoreIcon /> },
  { icon: <PsIcon /> },
  { icon: <BlocksIcon /> },
  { icon: <SevenIcon /> },
  { icon: <WordIcon />, bar: "open" },
  { icon: <PhotosIcon />, bar: "open" },
  { icon: <AcrobatIcon />, bar: "open" },
];

function Taskbar() {
  return (
    <footer className="flex h-[60px] items-center bg-[linear-gradient(90deg,#1b202c,#1b2831_20%,#25353c_60%,#24333b_85%,#1b2732)] text-white">
      {[<WinIcon />, <FindIcon />, <CortanaIcon />, <TaskViewIcon />].map((ic, i) => (
        <div key={i} className="flex w-[72px] justify-center">{ic}</div>
      ))}
      <div className="ml-[4px] flex h-full">
        {pinned.map((p, i) => (
          <div key={i} className="relative flex h-full w-[74.900px] items-center justify-center pr-[2px]">
            {p.bar === "active" && <div className="absolute inset-x-px inset-y-0 bg-[#4b555c]" />}
            <div className="relative">{p.icon}</div>
            {p.bar === "active" && <div className="absolute inset-x-px bottom-0 h-[3px] bg-[#76b9ed]" />}
            {p.bar === "open" && <div className="absolute inset-x-[7px] bottom-0 h-[3px] bg-[#76b9ed]" />}
            {p.bar === "split" && (
              <div className="absolute bottom-0 left-[7px] flex h-[3px] w-[61px]">
                <div className="w-[47px] bg-[#76b9ed]" />
                <div className="flex-1 bg-[#5f93bd]" />
              </div>
            )}
          </div>
        ))}
      </div>
      <svg viewBox="0 0 36 34" className="ml-[232px] mt-[3px] h-[34px] w-9">
        <circle cx="16" cy="16" r="16" fill="#fff" /><circle cx="16" cy="16" r="13.500" fill="#0f96d8" />
        <path d="M11 12a5 5 0 1 1 8 4c-2 1.300-3 2-3 4" fill="none" stroke="#fff" strokeWidth="3.200" /><circle cx="16" cy="24.500" r="2" fill="#fff" />
        <circle cx="28" cy="23.500" r="7.300" fill="#f8b21c" /><path d="M28 22v6M28 18.500v2" stroke="#fff" strokeWidth="2" />
      </svg>
      <svg viewBox="0 0 38 34" className="-mt-[6px] ml-[22px] h-[34px] w-[38px]">
        <defs><linearGradient id="cl" x1="0" y1="0" x2="0" y2="1"><stop offset="0" stopColor="#6f9de8" /><stop offset="1" stopColor="#d4e2fb" /></linearGradient></defs>
        <path fill="url(#cl)" d="M8 32a8 8 0 0 1-1-15.500A11 11 0 0 1 27 15a9 9 0 0 1 1 17z" /><circle cx="32" cy="6" r="4.500" fill="#c42b1c" />
      </svg>
      <Fit w={43} className="ml-[11px] pt-px text-[21px]">31°C</Fit>
      <svg viewBox="0 0 18 10" className="ml-[39px] h-[10px] w-[18px]" fill="none" stroke="#fff" strokeWidth="1.500"><path d="M.5 9.500 9 1l8.500 8.500" /></svg>
      <svg viewBox="0 0 24 14" className="ml-[16px] h-[14px] w-6"><path d="M1 1h20v12H1zM22.500 4.500v5" fill="none" stroke="#fff" strokeWidth="1.500" /><path fill="#fff" d="M3 3h9v8H3z" /></svg>
      <svg viewBox="0 0 20 20" className="ml-[15px] h-5 w-5" fill="none" stroke="#fff" strokeWidth="1.300"><path opacity=".5" d="M1 19A18 18 0 0 1 19 1" /><path opacity=".8" d="M5.500 19A13.500 13.500 0 0 1 19 6" /><path d="M10 19a9 9 0 0 1 9-8.500M13.500 19a5 5 0 0 1 4-4.500" /><circle cx="17.500" cy="17.500" r="1.500" fill="#fff" stroke="none" /></svg>
      <svg viewBox="0 0 22 20" className="ml-[13px] h-5 w-[22px]" fill="none" stroke="#fff" strokeWidth="1.300"><path d="M1 7h3.500L10 2v16l-5.500-5H1zM12.500 7q2 3 0 6M15.500 4.500q4 5.500 0 11M18.500 2.500q5 7.500 0 15" /></svg>
      <Fit w={34} className="ml-[17px] text-[18px]">ENG</Fit>
      <div className="ml-[20px] flex w-[94px] flex-col items-center text-[18px] leading-[28px]">
        <Fit w={43}>13:12</Fit>
        <Fit w={94}>04-11-2022</Fit>
      </div>
      <div className="relative ml-[28px] h-[24px] w-[50px]">
        <svg viewBox="0 0 24 24" className="h-6 w-6"><path fill="#fff" d="M0 0h24v19H14l-4 5v-5H0z" /><path d="M4.500 5.500h15M4.500 9.500h15M4.500 13.500h10" stroke="#1b2732" strokeWidth="1.300" /></svg>
        <div className="absolute left-[11px] top-[11px] flex h-6 w-6 items-center justify-center rounded-full border border-[#8b9297] bg-[#2b2f33] text-[16px] font-semibold">3</div>
      </div>
      <div className="ml-auto mr-[7px] h-full w-px bg-[#76808a]" />
    </footer>
  );
}

export default function App() {
  return (
    <div className="flex h-[1080px] w-[1920px] flex-col overflow-hidden bg-white font-['Open_Sans','Noto_Sans',sans-serif] leading-tight">
      <TabStrip />
      <AddressBar />
      <Bookmarks />
      <JiraHeader />
      <div className="flex h-[781px]">
        <Sidebar />
        <Main />
      </div>
      <Taskbar />
    </div>
  );
}
